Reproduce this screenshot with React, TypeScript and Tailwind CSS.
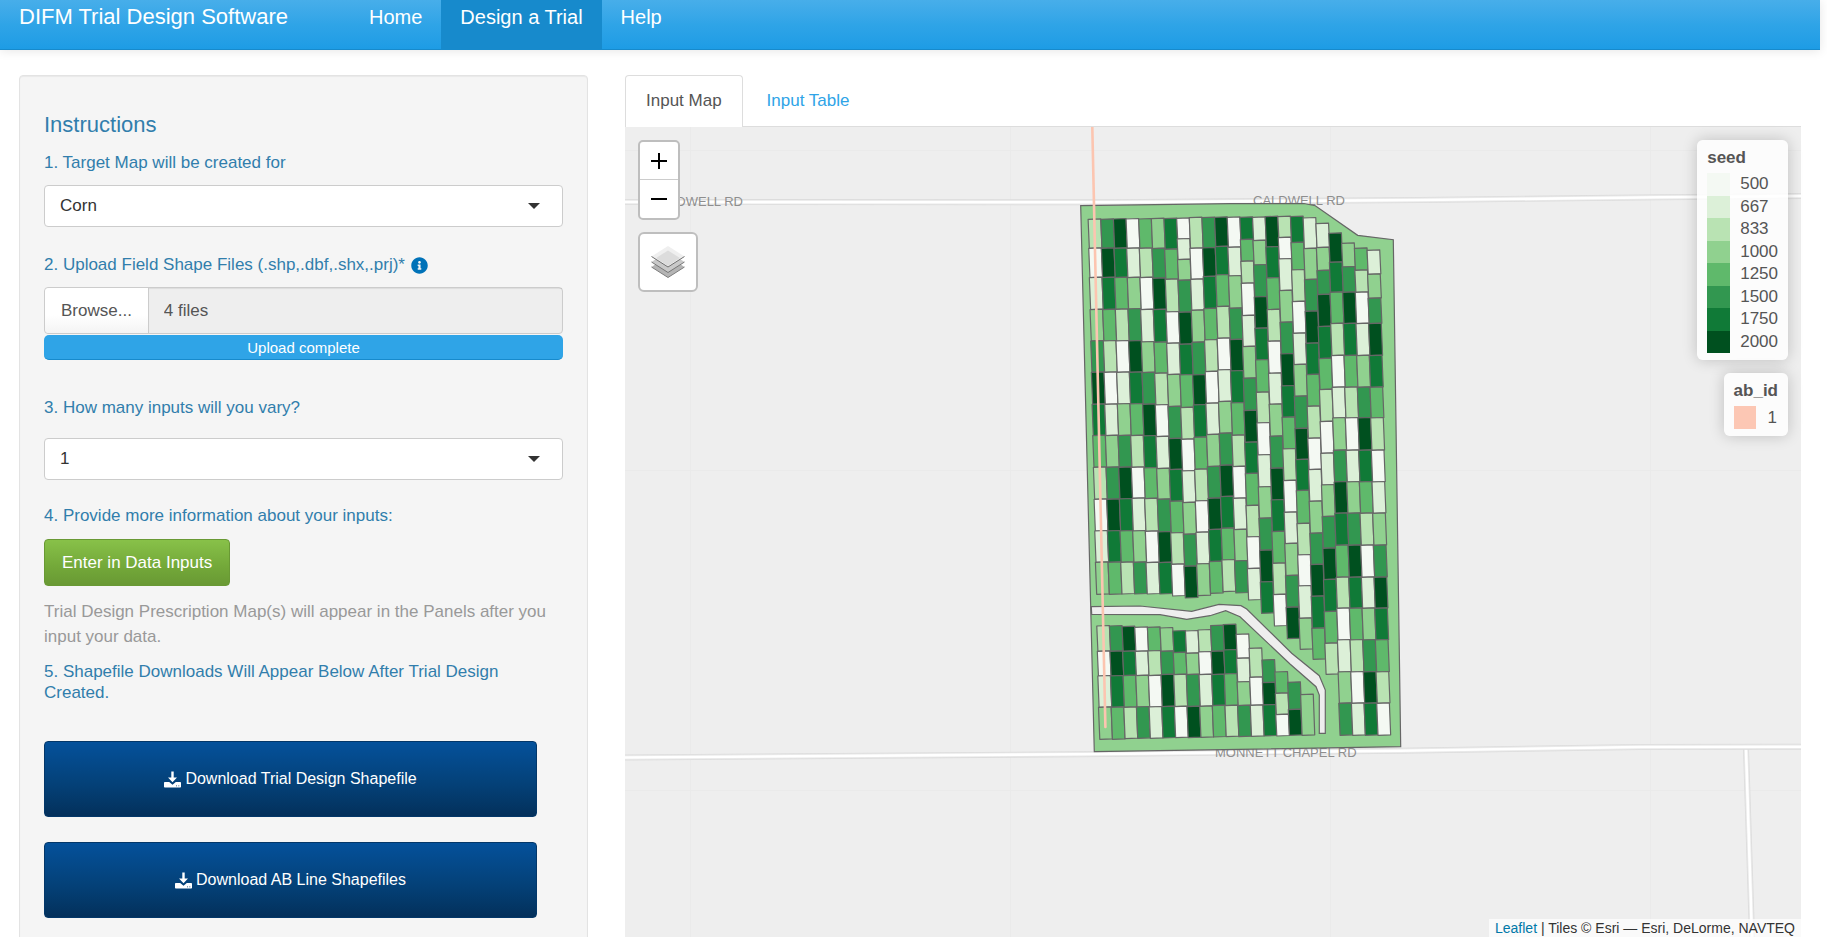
import React from "react";
import { FaInfoCircle } from "react-icons/fa";

const SEED_LEVELS = [
  { label: "500", swatch: "bg-[#f4f9f3]", fill: "#f4f9f3" },
  { label: "667", swatch: "bg-[#dcf0d8]", fill: "#dcf0d8" },
  { label: "833", swatch: "bg-[#b9e3b3]", fill: "#b9e3b3" },
  { label: "1000", swatch: "bg-[#90d18f]", fill: "#90d18f" },
  { label: "1250", swatch: "bg-[#5fb96b]", fill: "#5fb96b" },
  { label: "1500", swatch: "bg-[#329750]", fill: "#329750" },
  { label: "1750", swatch: "bg-[#107a37]", fill: "#107a37" },
  { label: "2000", swatch: "bg-[#00501f]", fill: "#00501f" },
];

// Seed rates rotate through this order down each strip.
const RATE_CYCLE = [2, 0, 1, 3, 5, 7, 6, 4];

type Strip = { col: number; start: number; y: number[] };

const EAST_ROWS = [196.7, 228.7, 260.3, 291, 323.3, 355, 386.3, 418.3, 450.3, 481.3, 513, 545, 576.3, 608.3];

const STRIPS: Strip[] = [
  { col: 0, start: 0, y: [92.3, 121.3, 150.7, 182.7, 214, 245.3, 277.3, 308.7, 340.3, 372.3, 404, 435.3, 467.3] },
  { col: 1, start: 4, y: [92.3, 121.3, 150.7, 182.7, 214, 245.3, 277.3, 308.7, 340.3, 372.3, 404, 435.3, 467.3] },
  { col: 2, start: 5, y: [92, 121.3, 150.7, 182.3, 214, 245.3, 277, 308.7, 340.3, 372, 404, 435.3, 467] },
  { col: 3, start: 1, y: [92, 121.3, 150.7, 182, 214, 245.3, 277, 308.7, 340.3, 371.3, 404, 435.3, 467] },
  { col: 4, start: 7, y: [92, 121.3, 150.7, 182.7, 215, 245.7, 277.3, 309, 341, 371.7, 404.3, 435.7, 467] },
  { col: 5, start: 3, y: [91.7, 121.7, 151.3, 182.7, 215.3, 246.3, 278, 309.7, 341.7, 372.3, 405, 435.7, 467] },
  { col: 6, start: 6, y: [91.7, 122.3, 152.3, 185, 216.3, 247.7, 279.7, 311.7, 342.7, 374.3, 406, 437.3, 469] },
  { col: 7, start: 1, y: [91.3, 112, 132.7, 153.3, 185.3, 217.3, 248, 280.7, 312.3, 344, 375.7, 407.3, 439.3, 471] },
  { col: 8, start: 0, y: [90.7, 121.3, 152.3, 183.3, 215.3, 248, 278, 310.3, 342.3, 374, 405.3, 437, 468.7] },
  { col: 9, start: 4, y: [90.7, 121, 149.7, 181.7, 213, 244.7, 276.3, 307.7, 339.7, 371.3, 402.7, 434.7, 466.3] },
  { col: 10, start: 5, y: [90.3, 119.7, 148, 179.7, 211.3, 243, 274.7, 306.3, 338.3, 369.7, 401.3, 433, 464.7] },
  { col: 11, start: 1, y: [90.3, 120.3, 149, 181.3, 212.7, 244, 276, 308.3, 339.7, 371.3, 402.7, 434, 466] },
  { col: 12, start: 6, y: [90.3, 112.7, 134.3, 156.3, 188.7, 219.7, 251.3, 283.7, 315.3, 346.7, 378.7, 410, 441.7, 473] },
  { col: 13, start: 2, y: [90.3, 113.7, 138, 170, 201.3, 233, 265.3, 296, 328, 360, 391.3, 423.3, 455, 486.3] },
  { col: 14, start: 5, y: [89.7, 120, 151, 182.7, 214.3, 246.3, 277.3, 309.3, 341.3, 373, 404.7, 436.3, 467.7, 499] },
  { col: 15, start: 0, y: [89.7, 110.7, 132, 163.7, 195.3, 227, 259, 290.3, 322, 353.7, 385.3, 416.7, 448.7, 480.3, 511.7] },
  { col: 16, start: 6, y: [89.7, 115.7, 143, 174.7, 206.3, 237.7, 269.3, 301.7, 332.7, 363.7, 396.7, 428, 459, 491.3, 522.3] },
  { col: 17, start: 2, y: [91, 121.7, 152.7, 184.3, 216.3, 247.7, 279.3, 311.3, 342.7, 374.3, 406.3, 437.7, 469.3, 501.3, 532.3] },
  { col: 18, start: 2, y: [96.7, 120.7, 143.7, 167.7, 199.7, 231.7, 262.7, 294.7, 326.3, 358, 389.7, 421.3, 452.7, 484.7, 516.3, 547.3] },
  { col: 19, start: 5, y: [106.3, 135.3, 165.3, ...EAST_ROWS] },
  { col: 20, start: 3, y: [116.3, 140, 165.3, ...EAST_ROWS] },
  { col: 21, start: 7, y: [121.3, 143.3, 165.3, ...EAST_ROWS] },
  { col: 22, start: 2, y: [123.3, 147.3, 171.3, ...EAST_ROWS] },
  { col: 0, start: 0, y: [499, 524.3, 549, 580.3, 612.3] },
  { col: 1, start: 4, y: [499, 524.3, 549, 580.3, 612.3] },
  { col: 2, start: 5, y: [499.7, 524.3, 548.7, 580.3, 611.7] },
  { col: 3, start: 1, y: [500.3, 524.3, 548.7, 580, 611.3] },
  { col: 4, start: 7, y: [500.3, 524, 548.7, 580, 611.3] },
  { col: 5, start: 3, y: [501, 524.3, 547.7, 579.7, 611] },
  { col: 6, start: 6, y: [504, 525.7, 547.7, 579.7, 610.7] },
  { col: 7, start: 2, y: [504, 526.3, 547.7, 579.7, 610.7] },
  { col: 8, start: 0, y: [503, 525, 547.7, 579.3, 610.3] },
  { col: 9, start: 4, y: [498.7, 524.3, 547.7, 578.7, 610] },
  { col: 10, start: 5, y: [497.7, 523, 547, 578.7, 609.7] },
  { col: 11, start: 1, y: [507.3, 531.3, 555, 578.7, 609.7] },
  { col: 12, start: 0, y: [521.3, 550.3, 578.3, 609.3] },
  { col: 13, start: 4, y: [533, 555.7, 578, 609] },
  { col: 14, start: 7, y: [545, 566.3, 587.7, 609] },
  { col: 15, start: 4, y: [555.3, 582.7, 608.3] },
  { col: 16, start: 3, y: [567.7, 608.3] },
];

const STRIP_WIDTH = 12.65;
const stripX = (col: number, y: number) => 463.3 + STRIP_WIDTH * col + 0.0213 * (y - 92);

function Plots() {
  return (
    <g stroke="#666" strokeWidth="1.2" strokeLinejoin="round">
      {STRIPS.map((strip, s) =>
        strip.y.slice(0, -1).map((top, i) => {
          const bottom = strip.y[i + 1];
          // Plots lean slightly more than the strip they belong to.
          const x0 = stripX(strip.col, top) - 0.2;
          const x1 = stripX(strip.col, bottom) + 0.4;
          const points = `${x0},${top} ${x0 + STRIP_WIDTH},${top - 0.5} ${x1 + STRIP_WIDTH},${bottom - 0.5} ${x1},${bottom}`;
          return (
            <polygon
              key={`${s}-${i}`}
              points={points}
              fill={SEED_LEVELS[RATE_CYCLE[(strip.start + i) % 8]].fill}
            />
          );
        })
      )}
    </g>
  );
}

function Road({ d }: { d: string }) {
  return (
    <g fill="none">
      <path d={d} stroke="#dcdcdc" strokeWidth="6" />
      <path d={d} stroke="#e9e9e9" strokeWidth="4.4" />
      <path d={d} stroke="#fff" strokeWidth="2.6" />
    </g>
  );
}

function FieldMap() {
  return (
    <svg
      className="block h-full w-full"
      viewBox="0 0 1176 810"
      preserveAspectRatio="xMidYMid slice"
      role="img"
      aria-label="Field map"
    >
      <rect width="1176" height="810" fill="#eee" />
      <path
        d="M65.5 0V810M385.5 0V810M705.5 0V810M1025.5 0V810M0 23.5H1176M0 343.5H1176M0 663.5H1176"
        stroke="#eaeaea"
        fill="none"
      />
      <Road d="M0 75L485 75.3L795 73L1035 70.3L1176 69" />
      <Road d="M1121 622L1127 810" />
      <Road d="M0 630.5L455 627.2L775 623.7L1015 620L1176 619.7" />
      <g fill="#8e8e8e" className="text-[13px]">
        <text x="118" y="79" textAnchor="end">CALDWELL RD</text>
        <text x="628" y="78">CALDWELL RD</text>
        <text x="590" y="630">MONNETT CHAPEL RD</text>
      </g>
      <path
        d="M455.7 78.7L605 76.7L679 76.5L690.3 78.7L732.7 108.3L768.3 112.7L775.7 619.7L469.3 624.7Z"
        fill="#90d18f"
        stroke="#666"
        strokeWidth="1.2"
      />
      <path
        d="M466.3 479.7L515 479L566.7 484.3L594 477.3L616 478.7L621.7 482L666.7 526.3L694.3 548.7L700.3 563V606.3H694.3V568L691 559.7L665 537L615 489.7L600.7 483.7L585 488.7L561.7 492.3L535 487.7L466.7 487.3Z"
        fill="#eee"
        stroke="#666"
        strokeWidth="1.2"
      />
      <Plots />
      <path d="M467.3 0L480.4 600" stroke="#fcc5b0" strokeWidth="2.6" fill="none" strokeLinecap="round" />
    </svg>
  );
}

function LayersIcon() {
  return (
    <svg viewBox="0 0 34 34" className="h-[34px] w-[34px]" aria-hidden="true">
      <path d="M0.5 22L17 32.5L33.5 22L17 11Z" fill="#b4b4b4" />
      <path d="M0.5 22L17 32.5L33.5 22" fill="none" stroke="#7d7d7d" />
      <path d="M0.5 17L17 27.5L33.5 17L17 6Z" fill="#c9c9c9" />
      <path d="M0.5 17L17 27.5L33.5 17" fill="none" stroke="#777" />
      <path d="M0.5 11.5L17 22L33.5 11.5L17 1Z" fill="#efefef" />
      <path d="M5 13L17 21L29 13L17 5.5Z" fill="#dcdcdc" />
      <path d="M0.5 11.5L17 22L33.5 11.5" fill="none" stroke="#6f6f6f" />
    </svg>
  );
}

function DownloadIcon() {
  return (
    <svg viewBox="0 0 17 17" className="h-[17px] w-[17px]" fill="currentColor" aria-hidden="true">
      <path d="M7.3 0.5H9.7V6.5H13L8.5 11.3L4 6.5H7.3Z" />
      <path
        fillRule="evenodd"
        d="M0.8 11H5.2L8.5 13.8L11.8 11H16.2Q17 11 17 11.8V15.7Q17 16.5 16.2 16.5H0.8Q0 16.5 0 15.7V11.8Q0 11 0.8 11ZM12 14.4V15.3H13V14.4ZM14.3 14.4V15.3H15.3V14.4Z"
      />
    </svg>
  );
}

function Dropdown({ id, options }: { id: string; options: string[] }) {
  return (
    <div className="relative">
      <select
        id={id}
        className="block h-[42px] w-full appearance-none rounded border border-[#ccc] bg-white px-[15px] text-[17px] text-[#333]"
      >
        {options.map((o) => (
          <option key={o}>{o}</option>
        ))}
      </select>
      <svg
        viewBox="0 0 12 6"
        className="pointer-events-none absolute top-[18px] right-[23px] h-[6px] w-3"
        fill="#333"
        aria-hidden="true"
      >
        <path d="M0 0H12L6 6Z" />
      </svg>
    </div>
  );
}

function DownloadButton({ children }: { children: React.ReactNode }) {
  return (
    <button
      type="button"
      className="flex h-[76px] w-[95%] items-center justify-center gap-1 rounded border border-[#033769] bg-linear-to-b from-[#04519b] via-[#044076] via-60% to-[#03305b] text-base text-white"
    >
      <DownloadIcon />
      {children}
    </button>
  );
}

function Sidebar() {
  return (
    <aside className="w-[569px] shrink-0 rounded border border-[#e3e3e3] bg-[#f5f5f5] px-6 pt-[37px] pb-6 text-[17px] leading-5 text-[#317eac] shadow-[inset_0_1px_1px_rgba(0,0,0,0.05)]">
      <h1 className="text-[22px] leading-6">Instructions</h1>
      <label htmlFor="crop" className="mt-4 mb-3 block">
        1. Target Map will be created for
      </label>
      <Dropdown id="crop" options={["Corn", "Soybeans"]} />
      <div className="mt-7 mb-3 flex items-center gap-1.5">
        <label htmlFor="shapefiles">2. Upload Field Shape Files (.shp,.dbf,.shx,.prj)*</label>
        <FaInfoCircle className="text-[17px] text-[#0072b8]" />
      </div>
      <div className="flex h-[47px] rounded border border-[#ccc] bg-[#eee] text-[#555]">
        <button
          type="button"
          className="rounded-l border-r border-[#ccc] bg-linear-to-b from-white via-white via-60% to-[#f4f4f4] px-4"
        >
          Browse...
        </button>
        <input
          id="shapefiles"
          readOnly
          value="4 files"
          className="min-w-0 flex-1 bg-transparent px-[15px] shadow-[inset_0_1px_1px_rgba(0,0,0,0.075)]"
        />
      </div>
      <div className="mt-px h-[25px] rounded-[5px] border-b border-[#178acc] bg-[#2fa4e7] text-center text-[15px] leading-[25px] text-white">
        Upload complete
      </div>
      <label htmlFor="inputs" className="mt-[38px] mb-5 block">
        3. How many inputs will you vary?
      </label>
      <Dropdown id="inputs" options={["1", "2"]} />
      <p className="mt-[26px] mb-[13px]">4. Provide more information about your inputs:</p>
      <button
        type="button"
        className="h-[47px] rounded border border-[#699934] bg-linear-to-b from-[#88c149] via-[#73a839] via-60% to-[#699934] px-[17px] text-white"
      >
        Enter in Data Inputs
      </button>
      <p className="mt-[13px] leading-[25px] text-[#999]">
        Trial Design Prescription Map(s) will appear in the Panels after you input your data.
      </p>
      <p className="mt-3 leading-[21px]">
        5. Shapefile Downloads Will Appear Below After Trial Design Created.
      </p>
      <div className="mt-[38px] flex flex-col gap-[25px]">
        <DownloadButton>Download Trial Design Shapefile</DownloadButton>
        <DownloadButton>Download AB Line Shapefiles</DownloadButton>
      </div>
    </aside>
  );
}

function Legends() {
  const card = "rounded-md bg-white/85 px-2.5 pt-[9px] pb-[7px] text-[17px] text-[#555] shadow-[0_0_15px_rgba(0,0,0,0.2)]";
  return (
    <div className="absolute top-[13px] right-[13px] flex flex-col items-end gap-[13px]">
      <section className={card}>
        <h2 className="mb-1.5 leading-[18px] font-bold">seed</h2>
        <ul className="flex h-[180px] flex-col leading-[22px]">
          {SEED_LEVELS.map((l) => (
            <li key={l.label} className="flex flex-1 items-center gap-2.5">
              <span className={`h-full w-[23px] ${l.swatch}`} />
              {l.label}
            </li>
          ))}
        </ul>
      </section>
      <section className={card}>
        <h2 className="mb-1.5 leading-[18px] font-bold">ab_id</h2>
        <div className="flex items-center gap-3 leading-[23px]">
          <span className="h-[23px] w-[22px] bg-[#fcc7b4]" />1
        </div>
      </section>
    </div>
  );
}

function MapControls() {
  return (
    <div className="absolute top-[13px] left-[13px] flex flex-col items-start gap-3">
      <div className="flex flex-col rounded-[5px] border-2 border-[#bebebe] bg-white">
        <button type="button" aria-label="Zoom in" className="flex h-[38px] w-[38px] items-center justify-center border-b border-[#ccc]">
          <svg viewBox="0 0 16 16" className="h-4 w-4" stroke="#000" strokeWidth="2" aria-hidden="true">
            <path d="M0 8H16M8 0V16" />
          </svg>
        </button>
        <button type="button" aria-label="Zoom out" className="flex h-[38px] w-[38px] items-center justify-center">
          <svg viewBox="0 0 16 16" className="h-4 w-4" stroke="#000" strokeWidth="2" aria-hidden="true">
            <path d="M0 8H16" />
          </svg>
        </button>
      </div>
      <button
        type="button"
        aria-label="Layers"
        className="flex h-[60px] w-[60px] items-center justify-center rounded-md border-2 border-[#bebebe] bg-white"
      >
        <LayersIcon />
      </button>
    </div>
  );
}

export default function App() {
  return (
    <div className="flex h-screen flex-col overflow-hidden bg-white font-['Liberation_Sans',Arial,sans-serif]">
      <header className="mr-[7px] flex h-[50px] shrink-0 border-b border-[#178acc] bg-linear-to-b from-[#47aeea] via-[#2fa4e7] via-50% to-[#1d9ce5] pl-[19px] text-white shadow-[0_1px_10px_rgba(0,0,0,0.1)]">
        <a href="#top" className="mr-[62px] pt-[5px] text-[22px] leading-6">
          DIFM Trial Design Software
        </a>
        <nav className="flex text-xl leading-[34px]">
          <a href="#home" className="px-[19px]">Home</a>
          <a href="#design" className="bg-[#178acc] px-[19px]">Design a Trial</a>
          <a href="#help" className="px-[19px]">Help</a>
        </nav>
      </header>
      <main className="flex min-h-0 flex-1 items-start gap-[37px] pt-[25px] pr-[26px] pl-[19px]">
        <Sidebar />
        <section className="flex min-w-0 flex-1 flex-col self-stretch">
          <div className="flex shrink-0 border-b border-[#ddd] text-[17px]">
            <a
              href="#input-map"
              className="-mb-px rounded-t border border-b-0 border-[#ddd] bg-white px-5 pt-[15px] pb-4 leading-5 text-[#555]"
            >
              Input Map
            </a>
            <a href="#input-table" className="px-6 pt-4 pb-[15px] leading-5 text-[#2fa4e7]">
              Input Table
            </a>
          </div>
          <div className="relative min-h-0 flex-1">
            <FieldMap />
            <MapControls />
            <Legends />
            <footer className="absolute right-0 bottom-0 bg-white/70 px-1.5 text-sm leading-[18px] text-[#333]">
              <a href="#leaflet" className="text-[#0078a8]">Leaflet</a> | Tiles © Esri — Esri, DeLorme, NAVTEQ
            </footer>
          </div>
        </section>
      </main>
    </div>
  );
}
